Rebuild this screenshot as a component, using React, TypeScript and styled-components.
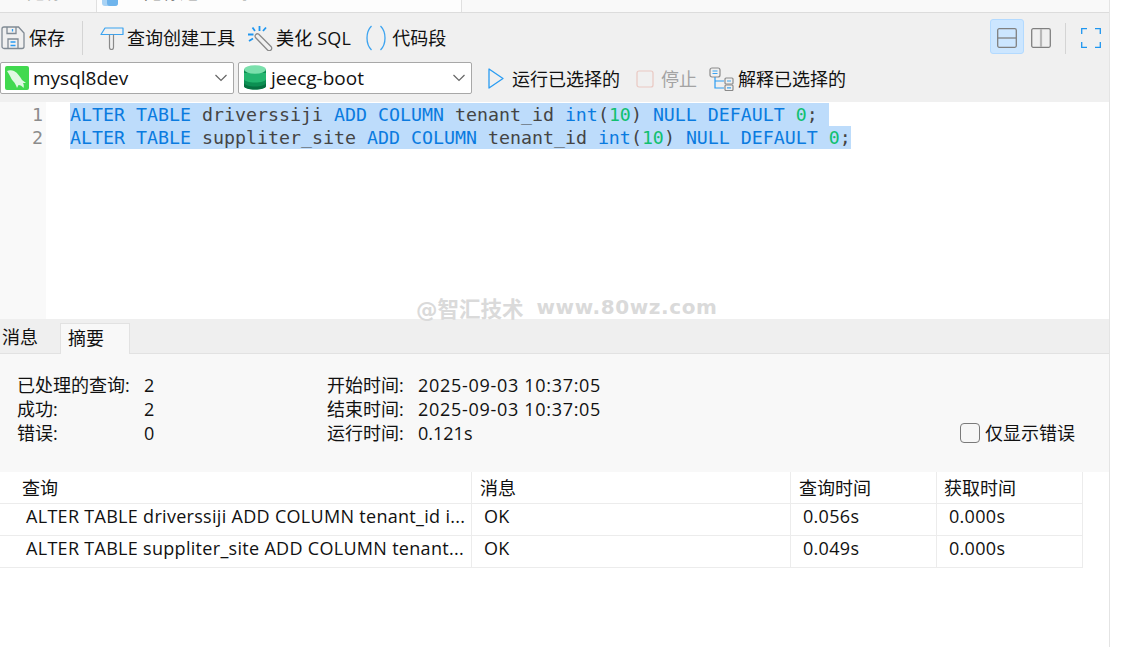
import React from 'react'
import styled, { createGlobalStyle } from 'styled-components'

const UI_FONT = `"Open Sans", "Noto Sans CJK SC", sans-serif`

const GlobalStyle = createGlobalStyle`
  html, body {
    margin: 0;
    padding: 0;
    background: #fff;
    overflow: hidden;
  }
  * { box-sizing: border-box; }
`

const Page = styled.div`
  width: 1134px;
  height: 647px;
  background: #fff;
  font-family: ${UI_FONT};
  color: #111;
  overflow: hidden;
`

const Window = styled.div`
  position: relative;
  width: 1110px;
  height: 647px;
  border-right: 1px solid #e4e4e4;
  display: flex;
  flex-direction: column;
`

const TabStrip = styled.div`
  height: 13px;
  flex: none;
  display: flex;
  background: #f9f9f9;
  border-bottom: 1px solid #dcdcdc;
  overflow: hidden;
`

const TabStub = styled.div`
  width: 97px;
  flex: none;
  font-size: 18px;
  line-height: 24px;
  margin-top: -20px;
  padding-left: 27px;
  color: #888;
  border-right: 1px solid #e0e0e0;
`

const ActiveDocTab = styled.div`
  width: 365px;
  flex: none;
  display: flex;
  background: #fdfdfd;
  border-right: 1px solid #e0e0e0;
  padding-left: 5px;
  gap: 26px;
  font-size: 18px;
  line-height: 24px;
  span { margin-top: -20px; }
  svg { flex: none; margin-top: -14px; }
`

const Toolbar = styled.div`
  height: 89px;
  flex: none;
  background: #f0f0f0;
  display: flex;
  flex-direction: column;
`

const ToolRow = styled.div`
  height: 47px;
  flex: none;
  display: flex;
  align-items: center;
  padding-top: 3px;
`

const ToolButton = styled.div<{ $gap?: number; $left?: number; $muted?: boolean }>`
  display: flex;
  align-items: center;
  gap: ${(p) => p.$gap ?? 4}px;
  margin-left: ${(p) => p.$left ?? 0}px;
  font-size: 18px;
  line-height: 24px;
  white-space: nowrap;
  color: ${(p) => (p.$muted ? '#a3a3a3' : '#111')};
  svg { flex: none; }
`

const RunButton = styled(ToolButton)`
  margin-top: 2px;
`

const SqlLabel = styled.span`
  letter-spacing: 0.2px;
`

const ToolDivider = styled.div<{ $left: number; $right?: number; $height?: number }>`
  width: 1px;
  height: ${(p) => p.$height ?? 34}px;
  margin-left: ${(p) => p.$left}px;
  margin-right: ${(p) => p.$right ?? 0}px;
  background: #d4d4d4;
  flex: none;
`

const LayoutGroup = styled.div`
  margin-left: auto;
  display: flex;
  align-items: center;
  margin-right: 8px;
`

const LayoutButton = styled.div<{ $active?: boolean }>`
  width: 34px;
  height: 35px;
  margin-top: -3px;
  padding-top: 3px;
  display: flex;
  align-items: center;
  justify-content: center;
  border-radius: 3px;
  background: ${(p) => (p.$active ? '#cce6ff' : 'transparent')};
  border: 1px solid ${(p) => (p.$active ? '#b3daff' : 'transparent')};
`

const SelectRow = styled.div`
  height: 42px;
  flex: none;
  display: flex;
  align-items: center;
  padding-bottom: 7px;
`

const Combo = styled.div<{ $width: number; $left?: number; $pad: number; $gap: number }>`
  width: ${(p) => p.$width}px;
  height: 32px;
  margin-left: ${(p) => p.$left ?? 0}px;
  flex: none;
  display: flex;
  align-items: center;
  background: #fff;
  border: 1px solid #a8a8a8;
  border-radius: 2px;
  font-size: 19px;
  padding-left: ${(p) => p.$pad}px;
  gap: ${(p) => p.$gap}px;
  svg.chev { margin-left: auto; margin-right: 5px; }
`

const EditorPane = styled.div`
  height: 217px;
  flex: none;
  display: flex;
  background: #fff;
`

const Gutter = styled.div`
  width: 46px;
  flex: none;
  background: #f9f9f9;
  padding-top: 1px;
  text-align: right;
  padding-right: 3px;
  font-family: "DejaVu Sans Mono", monospace;
  font-size: 18.28px;
  line-height: 23px;
  color: #8c8c8c;
`

const CodeArea = styled.div`
  flex: 1;
  padding: 1px 0 0 24px;
  font-family: "DejaVu Sans Mono", monospace;
  font-size: 18.28px;
  line-height: 23px;
  color: #444;
  white-space: pre;
`

const CodeLine = styled.div`
  height: 23px;
  width: max-content;
  background: #bddcfb;
`

const Kw = styled.span`
  color: #0a7be0;
`

const Num = styled.span`
  color: #10c070;
`

const Watermark = styled.div`
  position: absolute;
  left: 416px;
  top: 294px;
  display: flex;
  align-items: center;
  gap: 13px;
  height: 26px;
  font-family: "DejaVu Sans", "Noto Sans CJK SC", sans-serif;
  font-weight: 700;
  color: #dadada;
  white-space: pre;
`

const WatermarkBrand = styled.span`
  font-size: 21.5px;
`

const WatermarkSite = styled.span`
  font-size: 20px;
  letter-spacing: 0.6px;
`

const ResultTabs = styled.div`
  height: 35px;
  flex: none;
  display: flex;
  align-items: flex-end;
  background: #efefef;
  border-bottom: 1px solid #e2e2e2;
`

const ResultTab = styled.div<{ $active?: boolean; $width: number }>`
  width: ${(p) => p.$width}px;
  height: 31px;
  margin-bottom: -1px;
  padding-left: ${(p) => (p.$active ? 7 : 2)}px;
  font-size: 18px;
  line-height: 29px;
  background: ${(p) => (p.$active ? '#f8f8f8' : 'transparent')};
  border: ${(p) => (p.$active ? '1px solid #e2e2e2' : 'none')};
  border-bottom: none;
`

const Summary = styled.div`
  height: 118px;
  flex: none;
  background: #f8f8f8;
  padding: 19px 34px 0 17px;
  display: flex;
  font-size: 18px;
  line-height: 24px;
`

const StatGrid = styled.div<{ $width: number; $label: number }>`
  width: ${(p) => p.$width}px;
  flex: none;
  display: grid;
  grid-template-columns: ${(p) => p.$label}px 1fr;
  grid-auto-rows: 24px;
  align-content: start;
  white-space: nowrap;
`

const Stamp = styled.span`
  letter-spacing: 0.7px;
`

const ErrorsOnly = styled.label`
  margin-left: auto;
  margin-top: 48px;
  height: 24px;
  display: flex;
  align-items: center;
  gap: 5px;
`

const CheckBox = styled.span`
  width: 20px;
  height: 20px;
  border: 1px solid #7a7a7a;
  border-radius: 4px;
  background: #f6f6f6;
`

const Table = styled.div`
  width: 1083px;
  display: grid;
  grid-template-columns: 472px 319px 146px 146px;
  font-size: 18px;
`

const HeadCell = styled.div<{ $pad: number }>`
  height: 32px;
  line-height: 32px;
  padding-left: ${(p) => p.$pad}px;
  border-bottom: 1px solid #ececec;
  border-right: 1px solid #ececec;
`

const Cell = styled.div<{ $pad: number }>`
  height: 32px;
  line-height: 25px;
  padding-left: ${(p) => p.$pad}px;
  border-bottom: 1px solid #ececec;
  border-right: 1px solid #ececec;
  letter-spacing: 0.3px;
  white-space: nowrap;
  overflow: hidden;
`

function SaveIcon() {
  return (
    <svg width="24" height="24" viewBox="0 0 24 24" fill="none" stroke="#808a94" strokeWidth="1.3">
      <path d="M3 1h14.500l5.500 6v13.500a2 2 0 0 1-2 2H3a2 2 0 0 1-2-2V3a2 2 0 0 1 2-2z" />
      <path d="M6 1v6.500h9V1" />
      <path d="M11.500 3v2.500" stroke="#2a9cf2" />
      <path d="M7 22.500V13h10v9.500" />
      <path d="M9.500 16h5M9.500 19.500h5" stroke="#2a9cf2" />
    </svg>
  )
}

function QueryBuilderIcon() {
  return (
    <svg width="24" height="24" viewBox="0 0 24 24" fill="none">
      <path d="M1 8.500 5 2h18v6.500z" stroke="#3ba3f0" strokeWidth="1.200" strokeLinejoin="round" />
      <path d="M9.500 8.500v13a2 2 0 0 0 4 0v-13" stroke="#8a8a8a" strokeWidth="1.200" />
    </svg>
  )
}

function BeautifyIcon() {
  return (
    <svg width="25" height="25" viewBox="0 0 25 25" fill="none">
      <path d="M4.500 1.500l2.500 3.500M11.500 0v5M0 8.500h5.500M1 15l4-2.500M18 1.500l-3 3.500" stroke="#1e96f0" strokeWidth="1.800" />
      <path d="M10.500 8 23 20.500a2.400 2.400 0 0 1-3.500 3.500L7.500 11.500a2.400 2.400 0 0 1 3-3.500z" stroke="#8a8a8a" strokeWidth="1.300" />
    </svg>
  )
}

function SnippetIcon() {
  return (
    <svg width="22" height="26" viewBox="0 0 22 26" fill="none" stroke="#3ba3f0" strokeWidth="1.300">
      <path d="M6.500 1C.500 7 .500 19 6.500 25" />
      <path d="M15.500 1c6 6 6 18 0 24" />
    </svg>
  )
}

function MysqlIcon() {
  return (
    <svg width="24" height="24" viewBox="0 0 24 24">
      <rect width="24" height="24" rx="2" fill="#41d94f" />
      <path
        d="M2 5c2-1 5-1 7 0 4 2 6 6 8 9l4 3-3 0c1 2 1 3 .500 5-1.500-2-3-3-5-3l-1.500 3c-1-3-2-5-4-7C6 13 5 9 2 5z"
        fill="#dff8e2"
      />
    </svg>
  )
}

function DatabaseIcon() {
  return (
    <svg width="22" height="25" viewBox="0 0 22 25">
      <path d="M0 4v17c0 2 5 3.500 11 3.500S22 23 22 21V4z" fill="#0c8f52" />
      <path d="M0 8v6c0 2 5 3.500 11 3.500S22 16 22 14V8z" fill="#23b56f" />
      <path d="M0 18v3c0 2 5 3.500 11 3.500S22 23 22 21v-3c-1 2-5 3.500-11 3.500S1 20 0 18z" fill="#067040" />
      <ellipse cx="11" cy="4.500" rx="11" ry="4.200" fill="#7be0ac" />
    </svg>
  )
}

function Chevron() {
  return (
    <svg className="chev" width="14" height="8" viewBox="0 0 14 8" fill="none" stroke="#666" strokeWidth="1.200">
      <path d="M1.500 1 7 6.500 12.500 1" />
    </svg>
  )
}

function RunIcon() {
  return (
    <svg width="16" height="21" viewBox="0 0 16 21" fill="none" stroke="#2a9cf2" strokeWidth="1.300">
      <path d="M1 1v19l14-9.500z" strokeLinejoin="round" />
    </svg>
  )
}

function StopIcon() {
  return (
    <svg width="18" height="18" viewBox="0 0 18 18" fill="none" stroke="#eac8c2" strokeWidth="1.200">
      <rect x="1" y="1" width="16" height="16" rx="2" />
    </svg>
  )
}

function ExplainIcon() {
  return (
    <svg width="25" height="24" viewBox="0 0 25 24" fill="none" strokeWidth="1.200">
      <rect x="1" y="1" width="10" height="9" rx="2" stroke="#8a8a8a" />
      <path d="M3.500 4h5M3.500 6.500h5" stroke="#3ba3f0" />
      <path d="M6 10v11h9M6 14h9" stroke="#2a9cf2" />
      <rect x="16" y="11" width="8" height="6" rx="1" stroke="#8a8a8a" />
      <rect x="16" y="18" width="8" height="5.500" rx="1" stroke="#8a8a8a" />
      <path d="M18 14h4M18 20.800h4" stroke="#3ba3f0" />
    </svg>
  )
}

function StackedIcon() {
  return (
    <svg width="20" height="20" viewBox="0 0 20 20" fill="none" stroke="#808080" strokeWidth="1.300">
      <rect x="0.700" y="0.700" width="18.600" height="18.600" rx="1.500" />
      <path d="M1 10h18" />
    </svg>
  )
}

function SideBySideIcon() {
  return (
    <svg width="20" height="20" viewBox="0 0 20 20" fill="none">
      <rect x="0.700" y="0.700" width="18.600" height="18.600" rx="1.500" stroke="#808080" strokeWidth="1.300" />
      <path d="M10 1v18" stroke="#b8b8b8" strokeWidth="2.200" />
    </svg>
  )
}

function FullscreenIcon() {
  return (
    <svg width="20" height="20" viewBox="0 0 20 20" fill="none" stroke="#1e96f0" strokeWidth="1.300">
      <path d="M.700 6V.700H6M14 .700h5.300V6M19.300 14v5.300H14M6 19.300H.700V14" />
    </svg>
  )
}

function DocIcon() {
  return (
    <svg width="16" height="20" viewBox="0 0 16 20">
      <rect x="0" y="0" width="16" height="20" rx="3" fill="#a9d3f5" />
      <rect x="5" y="0" width="11" height="20" rx="3" fill="#6fb4ec" />
    </svg>
  )
}

function Sql({ table, newline }: { table: string; newline?: boolean }) {
  return (
    <CodeLine>
      <Kw>ALTER TABLE</Kw> {table} <Kw>ADD COLUMN</Kw> tenant_id <Kw>int</Kw>(<Num>10</Num>) <Kw>NULL DEFAULT</Kw>{' '}
      <Num>0</Num>;{newline ? ' ' : ''}
    </CodeLine>
  )
}

export default function App() {
  return (
    <Page>
      <GlobalStyle />
      <Window>
        <TabStrip>
          <TabStub>无标</TabStub>
          <ActiveDocTab>
            <DocIcon />
            <span>无标题 - 查询</span>
          </ActiveDocTab>
        </TabStrip>

        <Toolbar>
          <ToolRow>
            <ToolButton $left={1} $gap={4}>
              <SaveIcon />
              保存
            </ToolButton>
            <ToolDivider $left={17} />
            <ToolButton $left={17} $gap={3}>
              <QueryBuilderIcon />
              查询创建工具
            </ToolButton>
            <ToolButton $left={13} $gap={3}>
              <BeautifyIcon />
              <SqlLabel>美化 SQL</SqlLabel>
            </ToolButton>
            <ToolButton $left={14} $gap={5}>
              <SnippetIcon />
              代码段
            </ToolButton>
            <LayoutGroup>
              <LayoutButton $active>
                <StackedIcon />
              </LayoutButton>
              <LayoutButton>
                <SideBySideIcon />
              </LayoutButton>
              <ToolDivider $left={7} $right={15} $height={31} />
              <FullscreenIcon />
            </LayoutGroup>
          </ToolRow>
          <SelectRow>
            <Combo $width={234} $pad={4} $gap={4}>
              <MysqlIcon />
              mysql8dev
              <Chevron />
            </Combo>
            <Combo $width={234} $left={4} $pad={5} $gap={5}>
              <DatabaseIcon />
              jeecg-boot
              <Chevron />
            </Combo>
            <RunButton $left={16} $gap={8}>
              <RunIcon />
              运行已选择的
            </RunButton>
            <RunButton $left={16} $gap={7} $muted>
              <StopIcon />
              停止
            </RunButton>
            <RunButton $left={12} $gap={4}>
              <ExplainIcon />
              解释已选择的
            </RunButton>
          </SelectRow>
        </Toolbar>

        <EditorPane>
          <Gutter>
            <div>1</div>
            <div>2</div>
          </Gutter>
          <CodeArea>
            <Sql table="driverssiji" newline />
            <Sql table="suppliter_site" />
          </CodeArea>
        </EditorPane>
        <Watermark>
          <WatermarkBrand>@智汇技术</WatermarkBrand>
          <WatermarkSite>www.80wz.com</WatermarkSite>
        </Watermark>

        <ResultTabs>
          <ResultTab $width={60}>消息</ResultTab>
          <ResultTab $width={70} $active>
            摘要
          </ResultTab>
        </ResultTabs>

        <Summary>
          <StatGrid $width={310} $label={127}>
            <span>已处理的查询:</span>
            <span>2</span>
            <span>成功:</span>
            <span>2</span>
            <span>错误:</span>
            <span>0</span>
          </StatGrid>
          <StatGrid $width={400} $label={91}>
            <span>开始时间:</span>
            <Stamp>2025-09-03 10:37:05</Stamp>
            <span>结束时间:</span>
            <Stamp>2025-09-03 10:37:05</Stamp>
            <span>运行时间:</span>
            <span>0.121s</span>
          </StatGrid>
          <ErrorsOnly>
            <CheckBox />
            仅显示错误
          </ErrorsOnly>
        </Summary>

        <Table>
          <HeadCell $pad={22}>查询</HeadCell>
          <HeadCell $pad={8}>消息</HeadCell>
          <HeadCell $pad={8}>查询时间</HeadCell>
          <HeadCell $pad={7}>获取时间</HeadCell>
          <Cell $pad={26}>ALTER TABLE driverssiji ADD COLUMN tenant_id i...</Cell>
          <Cell $pad={12}>OK</Cell>
          <Cell $pad={12}>0.056s</Cell>
          <Cell $pad={12}>0.000s</Cell>
          <Cell $pad={26}>ALTER TABLE suppliter_site ADD COLUMN tenant...</Cell>
          <Cell $pad={12}>OK</Cell>
          <Cell $pad={12}>0.049s</Cell>
          <Cell $pad={12}>0.000s</Cell>
        </Table>
      </Window>
    </Page>
  )
}
